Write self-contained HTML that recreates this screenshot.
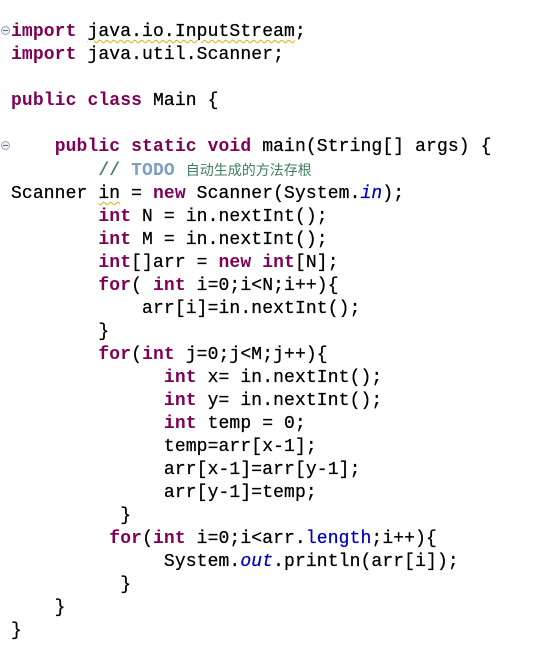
<!DOCTYPE html>
<html><head><meta charset="utf-8"><style>
html,body{margin:0;padding:0;background:#fff;width:537px;height:664px;overflow:hidden}
pre{position:absolute;left:11px;top:21px;margin:0;font-family:"Liberation Mono",monospace;font-size:18px;line-height:23px;letter-spacing:0.12px;color:#000;-webkit-text-stroke:0.25px #000}
.k{color:#7f0055;font-weight:bold;-webkit-text-stroke:0}
.c{color:#3f7f5f;font-family:"Noto Sans CJK SC",sans-serif;font-size:14px;letter-spacing:0;-webkit-text-stroke:0}
.t{color:#7f9fbf;font-weight:bold;-webkit-text-stroke:0}
.cm{color:#3f7f5f;-webkit-text-stroke:0.25px #3f7f5f}
.f{color:#0000c0;font-style:italic;-webkit-text-stroke:0.25px #0000c0}
.g{color:#0000c0;-webkit-text-stroke:0.25px #0000c0}
.w{text-decoration:underline wavy #e0b000;text-decoration-thickness:1px;text-underline-offset:3px}
.fold{position:absolute;left:1px;width:7px;height:7px;border:1px solid #9aa;border-radius:50%;background:#eef}
.fold:after{content:"";position:absolute;left:1px;top:3px;width:5px;height:1px;background:#668}
</style></head><body>
<div class="fold" style="top:26px"></div>
<div class="fold" style="top:141px"></div>
<pre><span class="k">import</span> <span class="w">java.io.InputStream</span>;
<span class="k">import</span> java.util.Scanner;

<span class="k">public</span> <span class="k">class</span> Main {

    <span class="k">public</span> <span class="k">static</span> <span class="k">void</span> main(String[] args) {
        <span class="cm">// </span><span class="t">TODO</span> <span class="c">自动生成的方法存根</span>
Scanner <span class="w">in</span> = <span class="k">new</span> Scanner(System.<span class="f">in</span>);
        <span class="k">int</span> N = in.nextInt();
        <span class="k">int</span> M = in.nextInt();
        <span class="k">int</span>[]arr = <span class="k">new</span> <span class="k">int</span>[N];
        <span class="k">for</span>( <span class="k">int</span> i=0;i&lt;N;i++){
            arr[i]=in.nextInt();
        }
        <span class="k">for</span>(<span class="k">int</span> j=0;j&lt;M;j++){
              <span class="k">int</span> x= in.nextInt();
              <span class="k">int</span> y= in.nextInt();
              <span class="k">int</span> temp = 0;
              temp=arr[x-1];
              arr[x-1]=arr[y-1];
              arr[y-1]=temp;
          }
         <span class="k">for</span>(<span class="k">int</span> i=0;i&lt;arr.<span class="g">length</span>;i++){
              System.<span class="f">out</span>.println(arr[i]);
          }
    }
}</pre>
</body></html>
